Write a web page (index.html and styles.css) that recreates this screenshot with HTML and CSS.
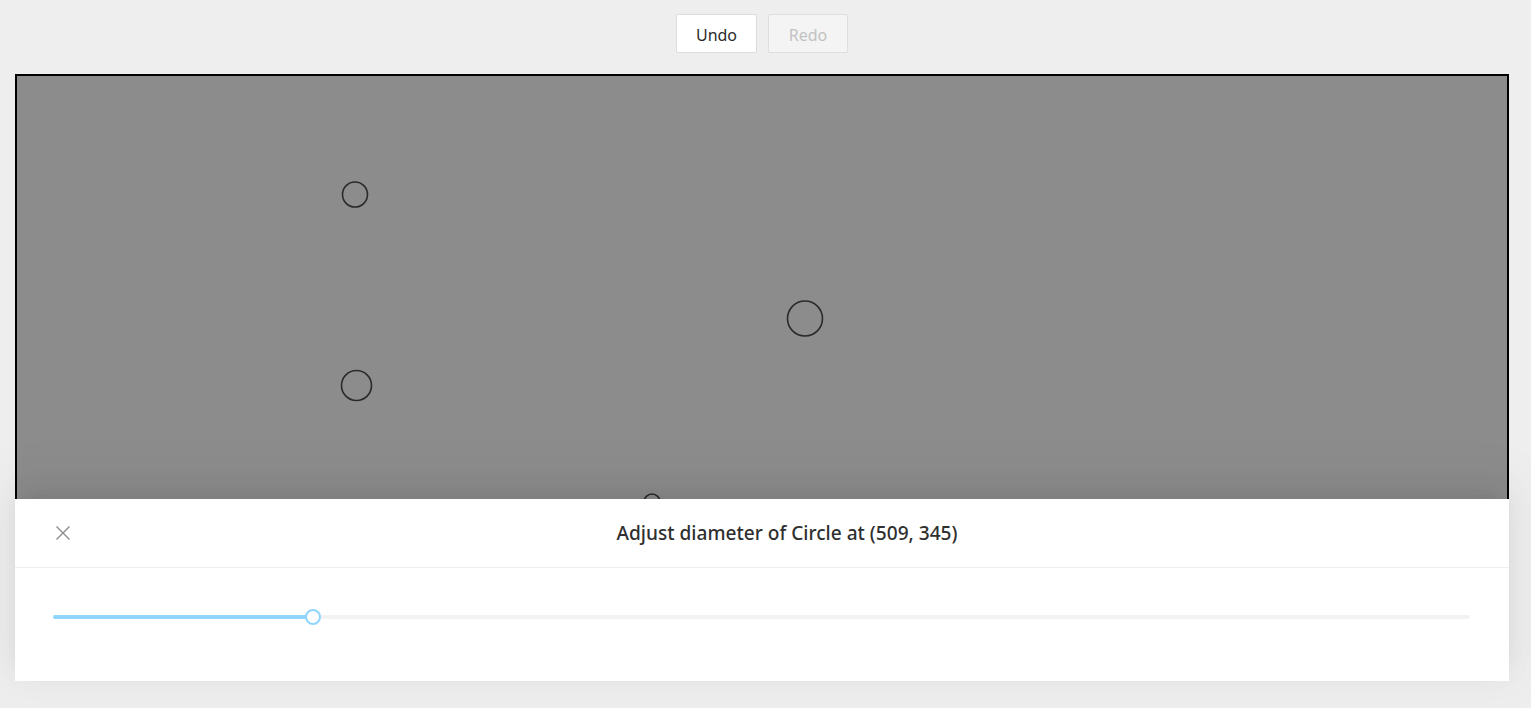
FILE: index.html
```html
<!DOCTYPE html>
<html>
<head>
<meta charset="utf-8">
<link rel="stylesheet" href="styles.css">
</head>
<body>
<div class="toolbar">
  <button class="btn">Undo</button>
  <button class="btn btn-disabled" disabled>Redo</button>
</div>
<div class="stage">
  <div class="canvas">
    <svg class="shapes" width="1490" height="603" viewBox="0 0 1490 603">
      <circle cx="338" cy="118.5" r="12.5" />
      <circle cx="788" cy="242.5" r="17.5" />
      <circle cx="339.5" cy="309.5" r="15" />
      <circle cx="635" cy="426" r="8" />
    </svg>
  </div>
  <div class="drawer">
    <div class="drawer-header">
      <button class="close" aria-label="Close">
        <svg width="16" height="16" viewBox="0 0 16 16"><path d="M1.5 1.5 L14.5 14.5 M14.5 1.5 L1.5 14.5" /></svg>
      </button>
      <div class="drawer-title">Adjust diameter of Circle at (509, 345)</div>
    </div>
    <div class="drawer-body">
      <div class="slider">
        <div class="rail"></div>
        <div class="track" style="width: 18.35%"></div>
        <div class="handle" style="left: 18.35%"></div>
      </div>
    </div>
  </div>
</div>
</body>
</html>
```
FILE: styles.css
```css
html, body {
  margin: 0;
  padding: 0;
  background: #eeeeee;
  font-family: "Noto Sans", "Open Sans", sans-serif;
  height: 100%;
  overflow: hidden;
}

.toolbar {
  display: flex;
  justify-content: center;
  gap: 11px;
  padding-top: 14px;
  margin: 0 22px 21px 15px;
}

.btn {
  height: 39px;
  width: 81px;
  padding: 3px 0 0 0;
  box-sizing: border-box;
  border: 1px solid #dcdcdc;
  border-radius: 2px;
  background: #ffffff;
  color: #2b2b2b;
  font-family: "Noto Sans", "Open Sans", sans-serif;
  font-size: 16px;
  line-height: 33px;
}

.btn-disabled {
  width: 80px;
  background: #f4f4f4;
  color: #c2c2c2;
  border-color: #dedede;
}

.stage {
  position: relative;
  margin: 0 22px 0 15px;
  height: 607px;
}

.canvas {
  box-sizing: border-box;
  height: 100%;
  border: 2px solid #000;
  background: #8c8c8c;
  overflow: hidden;
}

.shapes {
  display: block;
}

.shapes circle {
  fill: none;
  stroke: #2a2a2a;
  stroke-width: 1.6;
}

.drawer {
  position: absolute;
  left: 0;
  right: 0;
  bottom: 0;
  height: 182px;
  background: #ffffff;
  box-shadow: 0 -6px 16px -8px rgba(0,0,0,0.08), 0 -9px 28px 0 rgba(0,0,0,0.05), 0 -12px 48px 16px rgba(0,0,0,0.03);
  display: flex;
  flex-direction: column;
}

.drawer-header {
  position: relative;
  height: 69px;
  box-sizing: border-box;
  border-bottom: 1px solid #efefef;
  display: flex;
  align-items: center;
  justify-content: center;
  padding-left: 50px;
}

.close {
  position: absolute;
  left: 40px;
  top: 26px;
  width: 16px;
  height: 16px;
  padding: 0;
  border: 0;
  background: none;
}

.close svg {
  display: block;
}

.close path {
  stroke: #8a8a8a;
  stroke-width: 1.4;
  fill: none;
}

.drawer-title {
  font-size: 19.1px;
  font-weight: 500;
  color: #2f2f2f;
  margin-top: 0;
}

.drawer-body {
  flex: 1;
  padding: 0 39px 0 38px;
}

.slider {
  position: relative;
  height: 16px;
  margin-top: 41px;
}

.rail {
  position: absolute;
  left: 0;
  right: 0;
  top: 6px;
  height: 4px;
  border-radius: 2px;
  background: #f2f2f2;
}

.track {
  position: absolute;
  left: 0;
  top: 6px;
  height: 4px;
  border-radius: 2px;
  background: #91d5ff;
}

.handle {
  position: absolute;
  top: 0;
  width: 16px;
  height: 16px;
  margin-left: -8px;
  box-sizing: border-box;
  border: 2px solid #91d5ff;
  border-radius: 50%;
  background: #ffffff;
}
```
